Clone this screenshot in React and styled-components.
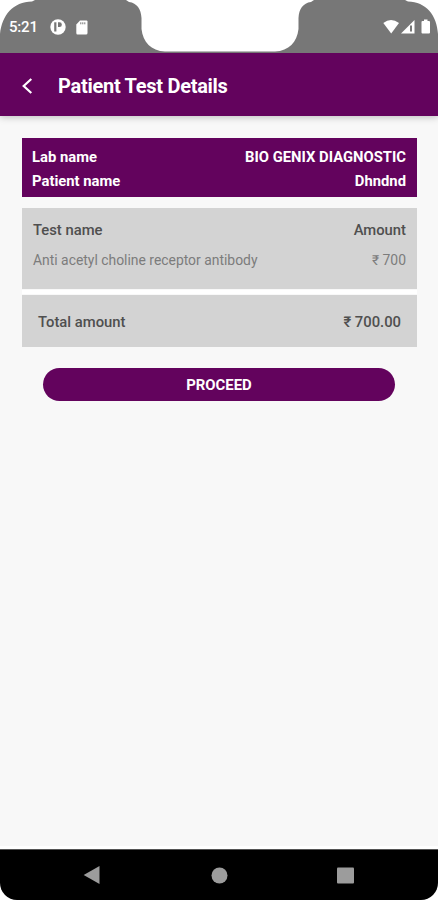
import React from 'react';
import styled, { createGlobalStyle } from 'styled-components';

const GlobalStyle = createGlobalStyle`
  * {
    box-sizing: border-box;
  }

  body {
    margin: 0;
    background: #ffffff;
    font-family: Roboto, 'Noto Sans', sans-serif;
  }
`;

const Screen = styled.div`
  width: 438px;
  height: 900px;
  display: flex;
  flex-direction: column;
  background: #ffffff;
  overflow: hidden;
`;

const StatusBar = styled.div`
  position: relative;
  z-index: 2;
  flex: none;
  height: 53px;
  display: flex;
  align-items: center;
  justify-content: space-between;
  padding: 1px 7px 0 9px;
  background: #ffffff;
`;

const StatusShape = styled.svg`
  position: absolute;
  top: 0;
  left: 0;
`;

const StatusGroup = styled.div`
  position: relative;
  display: flex;
  align-items: center;
  gap: 10px;
  color: #ffffff;
`;

const Clock = styled.span`
  width: 31px;
  font-size: 15px;
  font-weight: 500;
  line-height: 18px;
  letter-spacing: -0.2px;
`;

const Header = styled.header`
  position: relative;
  flex: none;
  height: 63px;
  display: flex;
  align-items: center;
  gap: 24px;
  padding: 2px 20px 0 21px;
  background: #63035d;
  box-shadow: 0 1px 7px rgba(0, 0, 0, 0.25);
`;

const BackButton = styled.button`
  width: 13px;
  height: 18px;
  padding: 0;
  border: none;
  background: transparent;
  display: flex;
`;

const Title = styled.h1`
  margin: 0;
  color: #ffffff;
  font-size: 20px;
  font-weight: 700;
  line-height: 26px;
  letter-spacing: -0.28px;
`;

const Content = styled.main`
  flex: 1;
  display: flex;
  flex-direction: column;
  padding: 22px 21px 0 22px;
  background: #f8f8f8;
`;

const InfoCard = styled.section`
  height: 59px;
  padding: 7px 11px 0 10px;
  background: #63035d;
`;

const TestCard = styled.section`
  height: 81px;
  margin-top: 11px;
  padding: 10px 11px 0;
  background: #d3d3d3;
`;

const TotalCard = styled.section`
  height: 52px;
  margin-top: 1px;
  padding: 15px 16px 0;
  background: #d3d3d3;
`;

const Divider = styled.div`
  height: 4px;
  margin-top: 1px;
  background: #ffffff;
`;

const Row = styled.div`
  display: flex;
  justify-content: space-between;
  margin-top: ${props => props.$top || 0}px;
`;

const Label = styled.span`
  color: #4f4f4f;
  font-size: 14.8px;
  font-weight: 500;
  line-height: 24px;
  white-space: nowrap;
`;

const InfoLabel = styled(Label)`
  color: #ffffff;
  font-weight: 700;
`;

const ItemLabel = styled(Label)`
  color: #7c7c7c;
  font-size: 13.9px;
  font-weight: 400;
`;

const ProceedButton = styled.button`
  height: 33px;
  margin: 21px 22px 0 21px;
  padding: 1px 0 0;
  border: none;
  border-radius: 17px;
  background: #63035d;
  color: #ffffff;
  font-family: inherit;
  font-size: 14.9px;
  font-weight: 700;
`;

const NavBar = styled.nav`
  flex: none;
  height: 51px;
  margin-top: 3px;
  display: flex;
  align-items: center;
  justify-content: space-between;
  padding: 0 84px 0 83px;
  background: #000000;
  border-top: 1px solid #555555;
  border-radius: 0 0 17px 17px;
`;

const App = () => {
  return (
    <>
      <GlobalStyle />
      <Screen>
        <StatusBar>
          <StatusShape width="438" height="53" viewBox="0 0 438 53">
            <path
              d="M0 53V34C2 15 13 2 32 1.5L35 0H126L129 2C137 3 141 9 141.5 18V29C143 42 151 51 165 51.5H275C289 51 297 42 298.500 29V18C299 9 303 3 311 2L314 0H405L408 1.500C426 2 437 15 438 34V53Z"
              fill="#777777"
            />
          </StatusShape>
          <StatusGroup>
            <Clock>5:21</Clock>
            <svg width="16" height="16" viewBox="0 0 16 16">
              <circle cx="8" cy="8" r="7.7" fill="#fff" />
              <path d="M5.300 3.300V12.500" stroke="#777" strokeWidth="2.200" />
              <path d="M8 3.300H9.500A2.300 2.300 0 0 1 9.500 8H8Z" fill="#777" />
            </svg>
            <svg width="12" height="15" viewBox="0 0 12 15">
              <path d="M4 0.500H10.500Q11.500 0.500 11.500 1.500V13Q11.500 14.500 10 14.500H1.500Q0.300 14.500 0.300 13V4.500Z" fill="#fff" />
              <path d="M4.800 2.300V4.300M6.800 2.300V4.300M8.800 2.300V4.300" stroke="#777" strokeWidth="1" />
            </svg>
          </StatusGroup>
          <StatusGroup>
            <svg width="48" height="16" viewBox="0 0 48 16">
              <path d="M0.300 4Q8 -1.800 16 4L8.200 14.500Z" fill="#fff" />
              <path d="M31.500 1V14.500H18Z" fill="#fff" />
              <path d="M27 6.500H29V12.500H27Z" fill="#777" />
              <path d="M41 0.500H44.500V2H46Q47 2 47 3V13.500Q47 14.500 46 14.500H39.500Q38.500 14.500 38.500 13.500V3Q38.500 2 39.500 2H41Z" fill="#fff" />
            </svg>
          </StatusGroup>
        </StatusBar>

        <Header>
          <BackButton aria-label="Back">
            <svg width="13" height="18" viewBox="0 0 13 18">
              <path d="M10.300 2L2.700 9L10.300 16" fill="none" stroke="#fff" strokeWidth="2.200" />
            </svg>
          </BackButton>
          <Title>Patient Test Details</Title>
        </Header>

        <Content>
          <InfoCard>
            <Row>
              <InfoLabel>Lab name</InfoLabel>
              <InfoLabel>BIO GENIX DIAGNOSTIC</InfoLabel>
            </Row>
            <Row>
              <InfoLabel>Patient name</InfoLabel>
              <InfoLabel>Dhndnd</InfoLabel>
            </Row>
          </InfoCard>

          <TestCard>
            <Row>
              <Label>Test name</Label>
              <Label>Amount</Label>
            </Row>
            <Row $top={6}>
              <ItemLabel>Anti acetyl choline receptor antibody</ItemLabel>
              <ItemLabel>₹ 700</ItemLabel>
            </Row>
          </TestCard>

          <Divider />

          <TotalCard>
            <Row>
              <Label>Total amount</Label>
              <Label>₹ 700.00</Label>
            </Row>
          </TotalCard>

          <ProceedButton>PROCEED</ProceedButton>
        </Content>

        <NavBar>
          <svg width="17" height="20" viewBox="0 0 17 20">
            <path d="M16.500 1V19L0.700 10Z" fill="#9c9c9c" />
          </svg>
          <svg width="18" height="17" viewBox="0 0 18 17">
            <circle cx="9.500" cy="8.500" r="8" fill="#9c9c9c" />
          </svg>
          <svg width="17" height="17" viewBox="0 0 17 17">
            <rect x="0" y="0.500" width="17" height="16" rx="1" fill="#9c9c9c" />
          </svg>
        </NavBar>
      </Screen>
    </>
  );
};

export default App;
